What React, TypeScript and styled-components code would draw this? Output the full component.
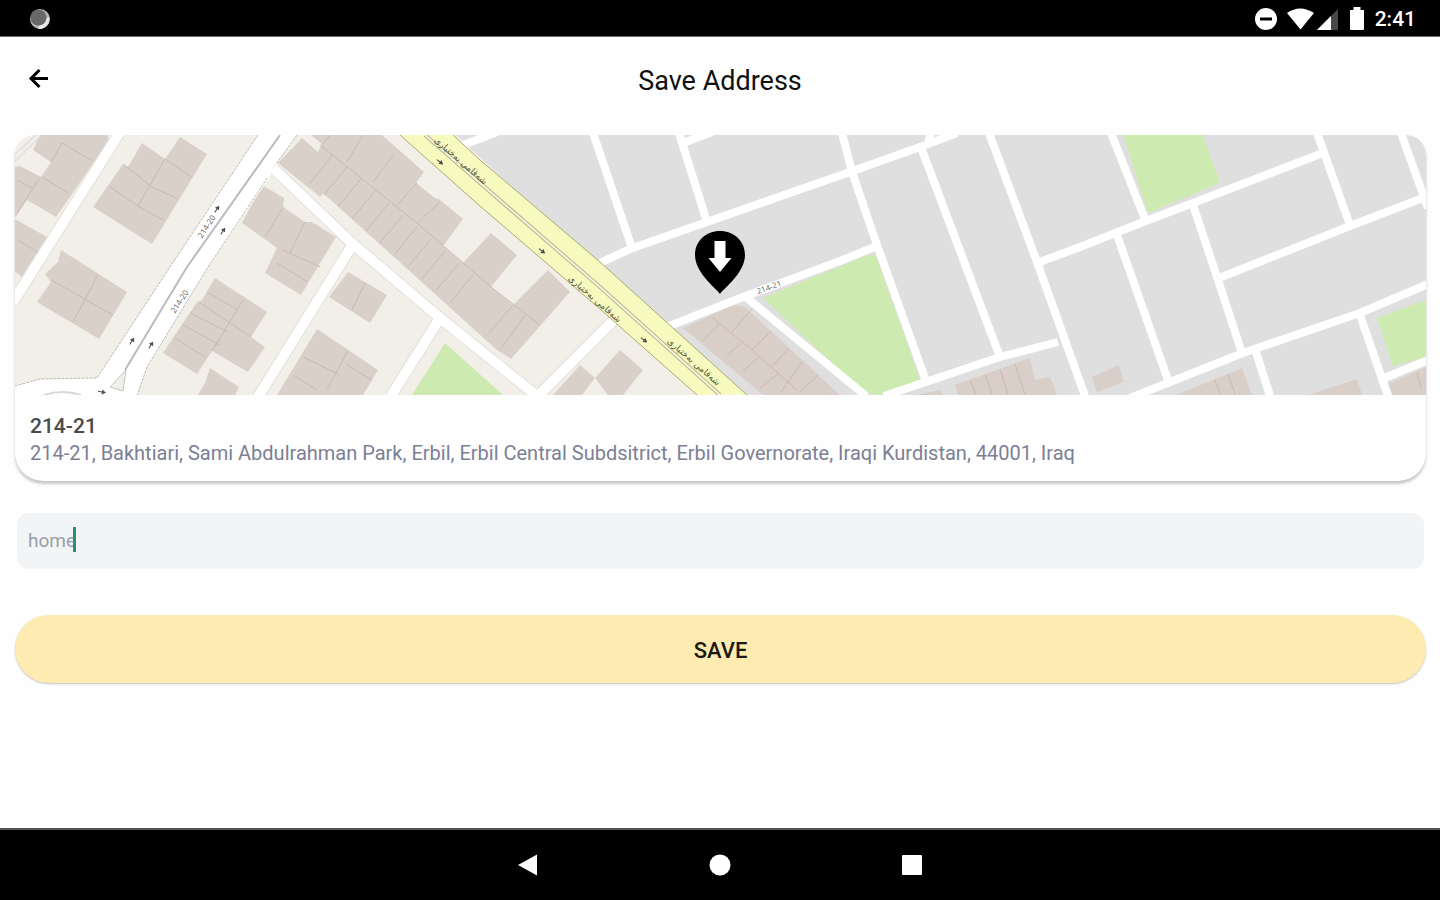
import React, { useState } from "react";
import styled, { createGlobalStyle } from "styled-components";

const GlobalStyle = createGlobalStyle`
  *, *::before, *::after { box-sizing: border-box; }
  body { margin: 0; background: #fefefe; font-family: Roboto, "Liberation Sans", sans-serif; }
`;

const Screen = styled.div`
  display: flex;
  flex-direction: column;
  min-height: 100vh;
  background: #fefefe;
`;

const StatusBar = styled.div`
  display: flex;
  align-items: center;
  justify-content: space-between;
  height: 37px;
  padding: 0 24px 0 28px;
  background: #000;
  border-bottom: 1px solid #6b6b6b;
  color: #fff;
`;

const StatusIcons = styled.div`
  display: flex;
  align-items: center;
  padding-top: 2px;
`;

const Clock = styled.time`
  margin-left: 8px;
  font-size: 21px;
  line-height: 24px;
  font-weight: 500;
`;

const AppBar = styled.header`
  display: grid;
  grid-template-columns: 48px 1fr 48px;
  align-items: center;
  height: 84px;
  padding: 0 15px;
`;

const BackButton = styled.button`
  display: flex;
  align-items: center;
  justify-content: center;
  width: 48px;
  height: 48px;
  padding: 0;
  border: 0;
  background: none;
  cursor: pointer;
`;

const Title = styled.h1`
  margin: 0;
  padding-top: 4px;
  font-size: 27px;
  line-height: 32px;
  font-weight: 400;
  text-align: center;
  color: #111;
`;

const Form = styled.form`
  display: flex;
  flex-direction: column;
  padding: 14px 14px 0 15px;
`;

const Card = styled.section`
  border-radius: 20px 20px 28px 28px;
  overflow: hidden;
  background: #fefefe;
  box-shadow: 0 3px 3px rgba(0, 0, 0, 0.22);
`;

const MapView = styled.svg`
  display: block;
  width: 100%;
  height: 260px;
`;

const CardText = styled.div`
  height: 86px;
  padding: 17px 15px 0;
`;

const Place = styled.h2`
  margin: 0;
  font-size: 21px;
  line-height: 28px;
  font-weight: 500;
  color: #4a4a4a;
`;

const Address = styled.p`
  margin: 0;
  font-size: 20px;
  line-height: 26px;
  color: #7b8095;
`;

const Field = styled.label`
  position: relative;
  display: block;
  margin: 32px 2px 0;
`;

const NameInput = styled.input`
  display: block;
  width: 100%;
  height: 56px;
  padding: 0 11px 2px;
  border: 0;
  border-radius: 12px;
  outline: none;
  background: #f2f4f6;
  color: #9a9fa6;
  font: 400 19px/24px Roboto, "Liberation Sans", sans-serif;
`;

const Caret = styled.span`
  position: absolute;
  left: 56px;
  top: 14px;
  width: 3px;
  height: 25px;
  background: #2f8c78;
`;

const SaveButton = styled.button`
  height: 68px;
  margin-top: 46px;
  padding: 4px 0 0;
  border: 0;
  border-radius: 34px;
  background: #feebb1;
  box-shadow: 0 1px 2px rgba(0, 0, 0, 0.24);
  color: #1c1a14;
  font: 500 22px/28px Roboto, "Liberation Sans", sans-serif;
  cursor: pointer;
`;

const NavBar = styled.nav`
  display: flex;
  align-items: center;
  justify-content: center;
  gap: 144px;
  height: 72px;
  margin-top: auto;
  border-top: 2px solid #555;
  background: #000;
`;

const NavButton = styled.button`
  display: flex;
  align-items: center;
  justify-content: center;
  width: 48px;
  height: 48px;
  padding: 0;
  border: 0;
  background: none;
  cursor: pointer;
`;

const lanes = [
  "600,263 630,249 707,222 850,172 920,147 957,133",
  "593,133 632,248",
  "679,133 707,222",
  "683,143 712,132",
  "842,133 852,172 877,245 926,381",
  "664,328 743,297 840,261 877,246",
  "747,298 866,396",
  "922,150 1000,357",
  "989,133 1037,262 1085,396",
  "884,396 1000,357 1058,342",
  "1037,263 1080,247 1143,222 1193,203 1323,153",
  "1111,133 1145,219",
  "1317,133 1350,225",
  "1193,205 1217,277 1242,353",
  "1117,235 1168,380",
  "1219,278 1267,259 1350,226 1428,196",
  "1401,133 1428,208",
  "1130,398 1243,353 1360,313 1428,284",
  "1256,352 1270,396",
  "1360,315 1388,396",
  "1382,379 1428,360",
  "461,146 497,132",
  "928,144 931,132",
];

const streets = [
  "120,132 13,302",
  "273,168 353,244 440,318 537,396",
  "353,244 258,397",
  "440,318 391,396",
  "538,396 616,318",
];

const buildings = [
  "40,135 108,135 108,142 56,217 27,200 15,218 15,167 20,166 41,177 51,162 33,150",
  "142,143 165,159 180,137 207,154 152,244 93,207 123,164 128,167",
  "15,219 47,237 22,277 15,272",
  "61,250 127,292 99,339 37,302 51,282 45,274 58,262",
  "262,185 284,198 283,207 305,222 312,222 336,237 301,295 265,273 277,248 242,223",
  "215,278 267,312 251,337 265,347 248,372 212,351 197,374 163,353 197,302 202,300",
  "210,368 239,387 235,395 198,395 205,383",
  "317,329 378,370 363,395 277,395",
  "348,272 387,295 370,323 329,297",
  "302,138 318,152 322,144 311,135 382,135 424,172 416,183 435,198 439,199 463,219 443,246 463,263 491,233 517,255 491,287 513,305 548,270 570,292 511,359 497,350 323,193 320,197 278,163",
  "580,365 595,378 582,395 553,395",
  "620,350 643,370 623,395 608,395 595,378",
];

const greyBlockBuildings = [
  "683,328 733,305 745,307 840,395 763,395",
  "955,385 1030,358 1035,380 1050,377 1057,395 958,395",
  "1092,377 1119,365 1124,382 1097,392",
  "1176,395 1242,368 1252,395",
  "1308,395 1357,379 1362,395",
  "1388,384 1426,367 1426,395 1393,395",
  "915,395 940,390 943,395",
];

const parks = [
  "445,343 503,395 412,395",
  "763,298 868,255 876,256 920,380 880,395 864,393",
  "1123,135 1203,135 1220,183 1148,213",
  "1377,318 1426,300 1426,357 1393,366",
];

const walls = [
  "M62,143L51,162M62,143L93,161M42,177L68,193M17,180L32,188M40,177L17,213",
  "M165,159L138,206M123,164L152,187L178,199M110,187L138,206L163,220M165,159L192,177",
  "M98,275L73,322M51,280L113,315M17,240L38,252",
  "M283,207L265,237M305,222L290,253M283,250L320,267M277,263L308,282",
  "M243,300L212,351M190,313L228,332M183,325L220,345M175,338L205,357M207,292L238,310M200,303L251,337",
  "M347,352L327,390M303,357L340,375M347,365L372,380M293,375L317,390M365,283L352,310",
  "M320,145L417,223L491,287L540,325M393,155L373,182M417,183L397,205M440,202L417,223M363,135L347,162M330,135L322,145M513,305L489,333M525,315L500,350",
  "M713,318L752,350L797,390M732,332L752,309M752,350L771,331M772,367L789,348M727,355L743,342M743,371L760,356M760,388L779,373M781,392L802,362M703,341L720,323M800,392L818,375",
  "M970,380L976,394M985,374L992,394M1000,369L1008,394M1015,364L1025,394M1215,380L1220,394M1228,374L1235,394M1417,372L1421,388",
];

const rowWalls = Array.from({ length: 11 }, (_, i) => ({ x: 333 + i * 14, y: 155 + i * 12 }));

const avenueLabels = [
  { x: 459, y: 163 },
  { x: 593, y: 301 },
  { x: 692, y: 364 },
];

const arrows = [
  { x: 440, y: 162, a: 38 },
  { x: 542, y: 251, a: 38 },
  { x: 644, y: 340, a: 38 },
  { x: 223, y: 231, a: -57 },
  { x: 217, y: 209, a: -57 },
  { x: 132, y: 341, a: -57 },
  { x: 151, y: 345, a: -57 },
  { x: 102, y: 392, a: 10 },
];

function StreetMap() {
  return (
    <MapView viewBox="15 135 1411 260" preserveAspectRatio="xMidYMid slice" role="img" aria-label="Map of 214-21, Bakhtiari">
      <rect x="-600" y="-200" width="1320" height="900" fill="#f2efe9" />
      <polygon points="440,120 2400,120 2400,395 735,395" fill="#e0dfe0" />
      <g fill="#d9d0c9">
        {buildings.map((p) => <polygon key={p} points={p} />)}
      </g>
      <g fill="#d9cfc8">
        {greyBlockBuildings.map((p) => <polygon key={p} points={p} />)}
      </g>
      <g fill="none" stroke="#c8bab0" strokeWidth="1">
        {walls.map((d) => <path key={d} d={d} />)}
        {rowWalls.map((w) => <path key={w.x} d={`M${w.x},${w.y}l-23,28`} />)}
      </g>
      <g fill="#cdebb0">
        {parks.map((p) => <polygon key={p} points={p} />)}
      </g>
      <path d="M15,154L36,135M15,161L42,135" stroke="#dcdcdf" strokeWidth="2" strokeDasharray="2 1" />
      <g fill="none" stroke="#e2dfdb" strokeWidth="12">
        {streets.map((p) => <polyline key={p} points={p} />)}
      </g>
      <path
        d="M258,135L170,267L97,378L40,379L15,386V396H137L147,367L208,267L270,177L273,167L297,135Z"
        fill="#fff"
      />
      <path
        d="M258,135L170,267L97,378L40,379L15,386M137,396L147,367L208,267L268,177M297,135L277,163"
        fill="none"
        stroke="#bdbbb8"
        strokeWidth="1"
        strokeDasharray="3 1"
      />
      <g fill="none" stroke="#fff" strokeWidth="10" strokeLinejoin="round">
        {streets.map((p) => <polyline key={p} points={p} />)}
      </g>
      <path d="M280,135L187,267L125,370" fill="none" stroke="#b9bbc2" strokeWidth="2" />
      <path d="M126,370L110,387L123,391Z" fill="#f0efeb" stroke="#c5c3c0" />
      <path d="M44,395Q62,389 81,395" fill="none" stroke="#d8d8d6" strokeWidth="2" />
      <g fill="none" stroke="#fff" strokeWidth="8" strokeLinejoin="round">
        {lanes.map((p) => <polyline key={p} points={p} />)}
      </g>
      <polygon points="400,135 453,135 480,160 600,262 747,395 697,395 600,309 480,206" fill="#f7fabf" />
      <path
        d="M400,135L480,206L600,309L697,395M453,135L480,160L600,262L747,395"
        fill="none"
        stroke="#a9ab73"
        strokeWidth="1"
      />
      <path d="M425,135L480,183L600,287L720,395" fill="none" stroke="#b5b78c" strokeWidth="4" />
      <path d="M425,135L480,183L600,287L720,395" fill="none" stroke="#f4f4dc" strokeWidth="2" />
      <g fontFamily='"DejaVu Sans", sans-serif' fill="#55563a" textAnchor="middle" fontSize="9">
        {avenueLabels.map((l) => (
          <text key={l.x} transform={`translate(${l.x} ${l.y}) rotate(41)`}>شەقامی بەختیاری</text>
        ))}
      </g>
      <g fontFamily='"Noto Sans", sans-serif' fill="#6a6a6a" textAnchor="middle" fontSize="8">
        <text transform="translate(209 228) rotate(-57)">214-20</text>
        <text transform="translate(182 303) rotate(-57)">214-20</text>
        <text transform="translate(770 290) rotate(-20)" stroke="#fff" strokeWidth="2" paintOrder="stroke">214-21</text>
      </g>
      <g fill="#4c4c48">
        {arrows.map((a) => (
          <path key={a.x} transform={`translate(${a.x} ${a.y}) rotate(${a.a})`} d="M-4,-0.5H0V-2.5L4,0L0,2.5V0.5H-4Z" />
        ))}
      </g>
      <path
        d="M720,294C716,288 695,273 695,255C695,241 706,231 720,231S745,241 745,255C745,273 724,288 720,294Z"
        fill="#000"
      />
      <path d="M714.500,241H725.500V258H731.500L720,272L708.500,258H714.500Z" fill="#fff" />
    </MapView>
  );
}

export default function App() {
  const [name, setName] = useState("home");
  return (
    <>
      <GlobalStyle />
      <Screen>
        <StatusBar>
          <svg width="23" height="23" viewBox="0 0 23 23" aria-hidden="true">
            <circle cx="12" cy="12" r="10" fill="#b5b5b5" />
            <path d="M21 10a10 10 0 0 1-11 12l2-5 5-5z" fill="#e8e8e8" />
            <circle cx="10.500" cy="10.500" r="8" fill="#686868" />
          </svg>
          <StatusIcons>
            <svg width="112" height="28" viewBox="0 0 112 28" aria-hidden="true">
              <circle cx="11" cy="14" r="11" fill="#fff" />
              <rect x="5" y="12.500" width="12" height="3" fill="#000" />
              <path d="M32 8Q45-1 59 8L45.500 24.500Z" fill="#fff" />
              <path d="M62 25L83 4V25Z" fill="#484848" />
              <path d="M62 25L76 11V25Z" fill="#fff" />
              <path d="M95 5H98.500V2H105.500V5H109V24Q109 25 108 25H96Q95 25 95 24Z" fill="#fff" />
            </svg>
            <Clock>2:41</Clock>
          </StatusIcons>
        </StatusBar>
        <AppBar>
          <BackButton type="button" aria-label="Back">
            <svg width="22" height="22" viewBox="0 0 22 22" fill="none" stroke="#000" strokeWidth="3">
              <path d="M20 10.500H3M11.500 2L3 10.500L11.500 19" />
            </svg>
          </BackButton>
          <Title>Save Address</Title>
        </AppBar>
        <Form onSubmit={(e) => e.preventDefault()}>
          <Card>
            <StreetMap />
            <CardText>
              <Place>214-21</Place>
              <Address>
                214-21, Bakhtiari, Sami Abdulrahman Park, Erbil, Erbil Central Subdsitrict, Erbil Governorate, Iraqi Kurdistan, 44001, Iraq
              </Address>
            </CardText>
          </Card>
          <Field>
            <NameInput aria-label="Address name" value={name} onChange={(e) => setName(e.target.value)} />
            <Caret />
          </Field>
          <SaveButton type="submit">SAVE</SaveButton>
        </Form>
        <NavBar>
          <NavButton type="button" aria-label="Back">
            <svg width="20" height="22" viewBox="0 0 20 22"><path d="M0 11L19 0.500V21.500Z" fill="#fff" /></svg>
          </NavButton>
          <NavButton type="button" aria-label="Home">
            <svg width="22" height="22" viewBox="0 0 22 22"><circle cx="11" cy="11" r="10.500" fill="#fff" /></svg>
          </NavButton>
          <NavButton type="button" aria-label="Recent apps">
            <svg width="20" height="20" viewBox="0 0 20 20"><rect width="20" height="20" rx="1" fill="#fff" /></svg>
          </NavButton>
        </NavBar>
      </Screen>
    </>
  );
}
